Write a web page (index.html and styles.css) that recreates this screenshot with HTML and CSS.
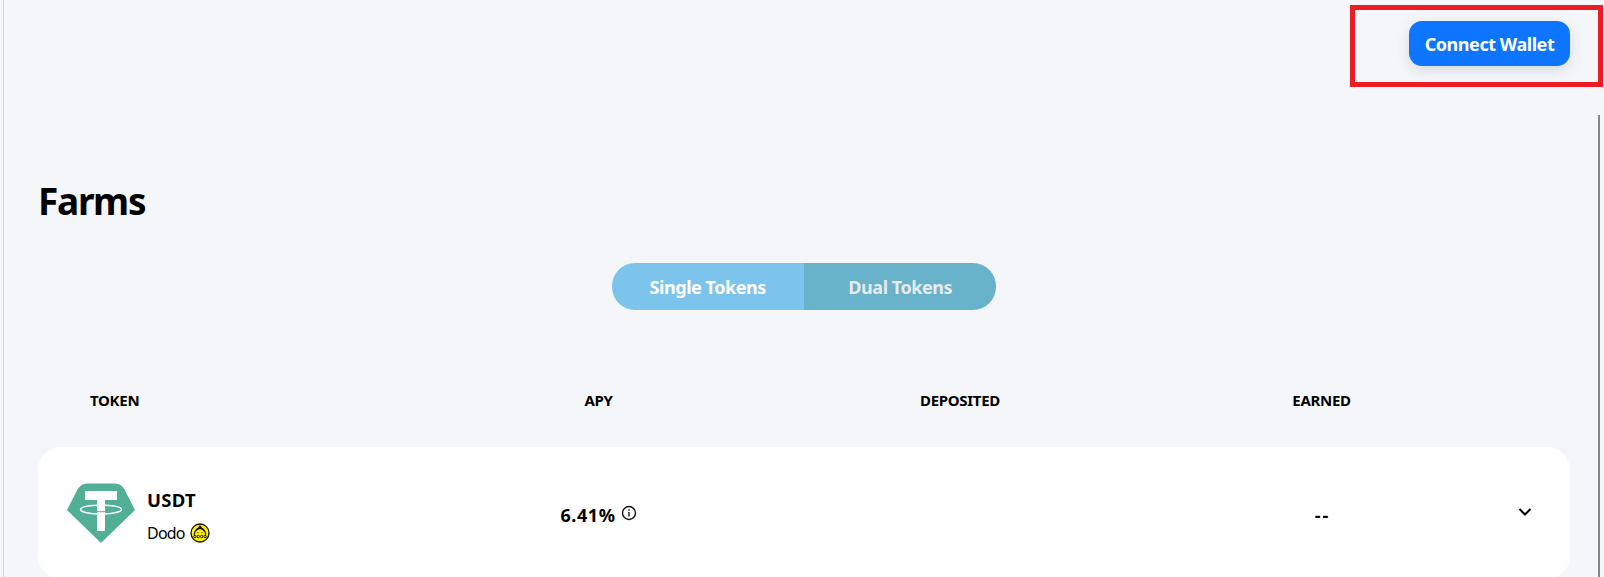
FILE: index.html
```html
<!DOCTYPE html>
<html lang="en">
<head>
<meta charset="utf-8">
<title>Farms</title>
<link rel="stylesheet" href="styles.css">
</head>
<body>
<div class="page">
  <header class="topbar">
    <button class="connect">Connect Wallet</button>
    <div class="highlight"></div>
  </header>
  <main class="content">
    <h1 class="title">Farms</h1>
    <div class="tabs">
      <button class="tab tab-single">Single Tokens</button>
      <button class="tab tab-dual">Dual Tokens</button>
    </div>
    <div class="columns heads">
      <span class="head-token">TOKEN</span>
      <span>APY</span>
      <span>DEPOSITED</span>
      <span>EARNED</span>
    </div>
    <section class="columns farm">
      <div class="token">
        <svg class="tether" viewBox="0 0 68 60" width="68" height="60">
          <path fill="#50af95" d="M20 .5h28q6 0 9.500 6L68 27 34 60 0 27 10.500 6.500q3.500-6 9.500-6z"/>
          <path fill="#fff" d="M18 8h32v9H38v31h-8V17H18z"/>
          <path fill="none" stroke="#fff" stroke-width="1.500" d="M30 22.200C21 22.600 13.500 24 13.500 26.500S23 31 34 31s20.500-2 20.500-4.500S47 22.600 38 22.200"/>
          <path fill="none" stroke="#50af95" stroke-width="1" d="M30 28.600q4 .3 8 0"/>
        </svg>
        <div class="names">
          <div class="symbol">USDT</div>
          <div class="source"><span>Dodo</span>
            <svg class="dodo" viewBox="0 0 20 20" width="20" height="20">
              <circle cx="10" cy="10" r="9" fill="#fff100" stroke="#151500" stroke-width="1.300"/>
              <path fill="none" stroke="#111" stroke-width="1.100" d="M4.200 12C4.500 8.500 6 5.500 10 4.500c4 1 5.500 4 5.800 7.500"/>
              <path fill="#111" d="M10 1.800l1.500 2.500Q14.500 6 15 9.500 12.500 5.900 10 5.900T5 9.500Q5.500 6 8.500 4.300zM7.500 9h1v1h-1zM11.500 9h1v1h-1z"/>
              <g fill="none" stroke="#111" stroke-width="1"><circle cx="4.900" cy="13.500" r="1.200"/><circle cx="8.300" cy="13.500" r="1.200"/><circle cx="11.700" cy="13.500" r="1.200"/><circle cx="15.100" cy="13.500" r="1.200"/></g>
            </svg>
          </div>
        </div>
      </div>
      <div class="apy"><span>6.41%</span>
        <svg class="info" viewBox="0 0 16 16" width="16" height="16"><circle cx="8" cy="8" r="6.500" fill="none" stroke="#111" stroke-width="1.400"/><path fill="#111" d="M7.300 7h1.400v4.500H7.300zM7.300 4.300h1.400v1.400H7.300z"/></svg>
      </div>
      <div></div>
      <div class="earned">--</div>
      <svg class="chevron" viewBox="0 0 14 10" width="14" height="10"><path d="M1.500 2L7 7.500 12.500 2" fill="none" stroke="#000" stroke-width="2"/></svg>
    </section>
  </main>
  <div class="scrollbar"></div>
</div>
</body>
</html>
```
FILE: styles.css
```css
* { box-sizing: border-box; }
html, body { margin: 0; height: 100%; overflow: hidden; }
body { background: #f4f6fa; color: #000; font-family: "Noto Sans", "Open Sans", sans-serif; }
button { border: 0; padding: 0; font: inherit; white-space: nowrap; }
.page { position: relative; height: 577px; margin-left: 3px; border-left: 1px solid #d5d6dc; overflow: hidden; }
.topbar { display: flex; justify-content: flex-end; height: 115px; padding: 21px 34px 0 0; }
.connect { width: 161px; height: 45px; border-radius: 13px; background: #0d75ff; color: #fff; font-size: 18px; font-weight: 700; letter-spacing: -0.45px; box-shadow: 0 4px 14px rgba(0, 0, 0, .12); }
.highlight { position: absolute; top: 5px; right: 1px; width: 253px; height: 82px; border: 5px solid #ed1c24; }
.content { padding: 0 34px; }
.title { margin: 61px 0 0; height: 50px; line-height: 50px; font-size: 37px; font-weight: 700; letter-spacing: -1.300px; }
.tabs { display: flex; width: 384px; height: 47px; margin: 37px auto 0; border-radius: 23px; overflow: hidden; }
.tab { flex: 1; font-size: 18px; font-weight: 700; letter-spacing: -0.45px; color: #fff; background: #7dc4ed; }
.tab-dual { padding-left: 1px; color: #e7eaee; background: #68b3c9; }
.columns { display: grid; grid-template-columns: 380px 361px 362px 361px 68px; }
.heads { height: 24px; margin-top: 78px; line-height: 24px; font-size: 15px; font-weight: 700; text-align: center; letter-spacing: -0.3px; }
.head-token { text-align: left; padding-left: 52px; }
.farm { height: 132px; margin-top: 35px; border-radius: 23px; background: #fff; align-items: center; }
.token { display: flex; align-items: center; padding-left: 29px; }
.tether { margin-top: 0; }
.names { margin: 8px 0 0 12px; }
.symbol { height: 32px; line-height: 32px; font-size: 18.500px; font-weight: 700; letter-spacing: 0.3px; }
.source { display: flex; align-items: center; height: 34px; gap: 5px; font-size: 16px; letter-spacing: -0.8px; }
.apy { display: flex; justify-content: center; align-items: center; gap: 5px; padding-top: 4px; font-size: 18px; font-weight: 700; letter-spacing: 0.6px; }
.info { margin-top: -5px; }
.earned { text-align: center; font-size: 18px; font-weight: 700; letter-spacing: 2px; padding: 4px 0 0 2px; }
.chevron { margin: -2px 0 0 16px; }
.scrollbar { position: absolute; top: 115px; right: 4px; bottom: 0; width: 2px; background: #858585; }
```
